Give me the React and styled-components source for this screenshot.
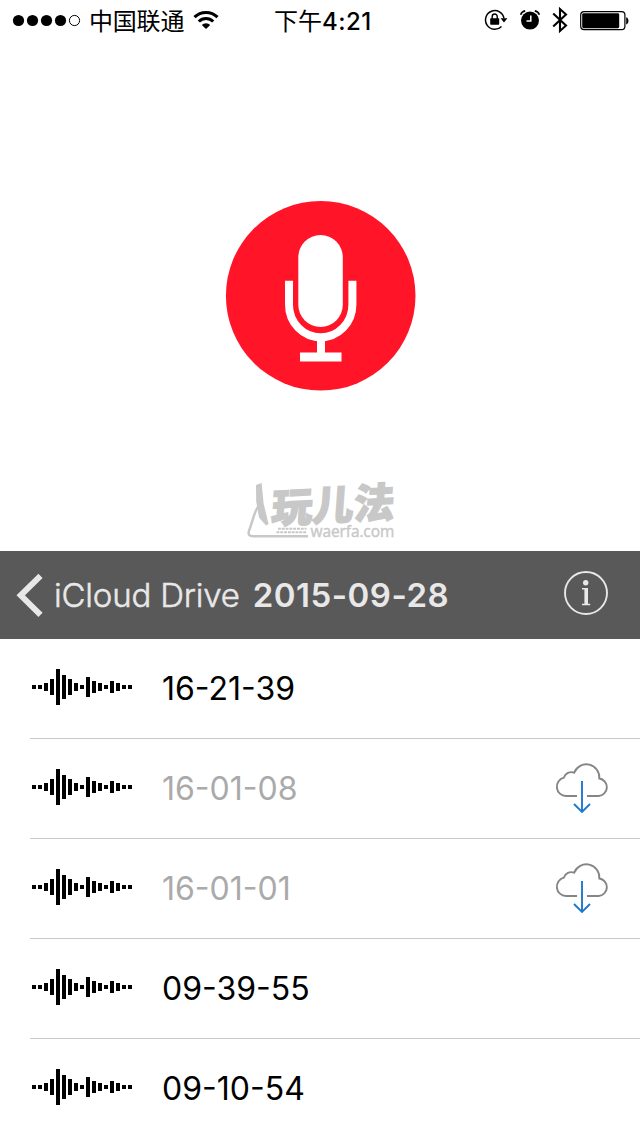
import React from "react"
import styled, { createGlobalStyle } from "styled-components"

const GlobalStyle = createGlobalStyle`
  * {
    box-sizing: border-box;
  }

  body {
    margin: 0;
    background: #fff;
    color: #000;
    font-family: Inter, "Noto Sans CJK SC", sans-serif;
  }

  svg {
    display: block;
    flex: none;
    overflow: visible;
  }
`

const recordings = [
  { name: "16-21-39", local: true },
  { name: "16-01-08", local: false },
  { name: "16-01-01", local: false },
  { name: "09-39-55", local: true },
  { name: "09-10-54", local: true },
]

const waveBars = [4, 4, 8, 16, 36, 24, 16, 8, 4, 20, 12, 8, 4, 12, 8, 4, 4]

const Signal = () => (
  <svg width="68" height="12" viewBox="0 0 68 12">
    {[6.5, 20.5, 34.5, 48.5].map(x => <circle key={x} cx={x} cy="6.5" r="5.6" />)}
    <circle cx="62.5" cy="6.5" r="5.1" fill="none" stroke="#000" />
  </svg>
)

const Wifi = () => (
  <svg width="26" height="20" viewBox="0 0 26 20">
    <g fill="none" stroke="#000" strokeWidth="3.1">
      <path d="M1.5 7.2a16.3 16.3 0 0 1 23 0" />
      <path d="M5.8 11.5a10.2 10.2 0 0 1 14.4 0" />
    </g>
    <path d="M8.8 14.9a6 6 0 0 1 8.4 0L13 19z" />
  </svg>
)

const RotationLock = () => (
  <svg width="24" height="22" viewBox="0 0 24 22">
    <path d="M17.5 17.4A9.3 9.3 0 1 1 20 9.5" fill="none" stroke="#000" strokeWidth="1.5" />
    <path d="M16.6 9.3h6.8L20 13.5z" />
    <rect x="6.2" y="9.2" width="9" height="6.5" rx=".6" />
    <path d="M8.2 10V7.5a2.5 2.5 0 0 1 5 0V10" fill="none" stroke="#000" strokeWidth="1.4" />
  </svg>
)

const Alarm = () => (
  <svg width="20" height="20" viewBox="0 0 20 20">
    <circle cx="10" cy="10.6" r="9" />
    <path d="M10.8 5.5V11H6.5" fill="none" stroke="#fff" strokeWidth="1.5" />
    <path d="M.6 4.8A6 6 0 0 1 5.2.9M14.8.9a6 6 0 0 1 4.6 3.9" fill="none" stroke="#000" strokeWidth="1.6" />
  </svg>
)

const Bluetooth = () => (
  <svg width="16" height="28" viewBox="0 0 16 28">
    <path d="M1.2 7.6l12.8 12-6 5.4V3l6 5.4-12.8 12" fill="none" stroke="#000" strokeWidth="2.1" />
  </svg>
)

const Battery = () => (
  <svg width="49" height="19" viewBox="0 0 49 19">
    <rect x=".7" y=".7" width="44.2" height="18" rx="3.4" fill="none" stroke="#000" strokeWidth="1.2" />
    <rect x="2.2" y="2.2" width="37" height="15" rx="1.4" />
    <path d="M46.2 6.2c3 .8 3 6.4 0 7.2z" />
  </svg>
)

const Microphone = () => (
  <svg width="190" height="190" viewBox="0 0 190 190">
    <circle cx="95.7" cy="94.8" r="94.8" fill="#ff1428" />
    <rect x="73.3" y="34" width="44.5" height="92" rx="22.25" fill="#fff" />
    <path d="M64 79.8v24a31.7 32.5 0 0 0 63.4 0v-24" fill="none" stroke="#fff" strokeWidth="8" />
    <path d="M92 138h8v13.5h16.5v9H75v-9h17z" fill="#fff" />
  </svg>
)

const Compass = () => (
  <svg width="64" height="60" viewBox="0 0 64 60">
    <g fill="none" stroke="#c8c8c8">
      <path d="M12.5 24C7.5 28 5.5 42 1.9 50Q.5 55.2 6 55.2H61" strokeWidth="2.5" />
      <path d="M31 47.7h28.5M29.5 51.2H60" strokeWidth="2.1" strokeDasharray="2.9 .9" />
    </g>
    <path d="M9 4l5.6-2 2 20.5 5 20.5-2.6 1.5-7-8-2.8-16z" fill="#c8c8c8" />
  </svg>
)

const BackArrow = () => (
  <svg width="28" height="44" viewBox="0 0 28 44">
    <path d="M24.5 2.8L4.7 22.3l19.8 19.5" fill="none" stroke="#e8e8e8" strokeWidth="5.9" />
  </svg>
)

const Info = () => (
  <svg width="44" height="44" viewBox="0 0 44 44">
    <circle cx="22" cy="22" r="21" fill="none" stroke="#e8e8e8" strokeWidth="1.9" />
    <circle cx="21.7" cy="11.8" r="2.7" fill="#e8e8e8" />
    <path d="M18 17h6v15.8h2.2v1.4H18v-1.4h2.400V18.500H18z" fill="#e8e8e8" />
  </svg>
)

const Waveform = () => (
  <svg width="100" height="36" viewBox="0 0 100 36">
    {waveBars.map((height, i) => (
      <rect key={i} x={i * 6} y={18 - height / 2} width="4" height={height} />
    ))}
  </svg>
)

const CloudDownload = () => (
  <svg width="52" height="52" viewBox="0 0 52 52" fill="none" strokeWidth="1.9">
    <path
      d="M21 35H10A9.300 9.300 0 0 1 7.800 16.700 7.800 7.800 0 0 1 18.200 11.700 13 13 0 0 1 43.300 17.500 8.800 8.800 0 0 1 42.500 35H31"
      stroke="#858585"
    />
    <path d="M26 20v30.5M18 43l8 8 8-8" stroke="#1e78cc" />
  </svg>
)

const App = () => (
  <Screen>
    <GlobalStyle />
    <StatusBar>
      <Carrier>
        <Signal />
        <span>中国联通</span>
        <Wifi />
      </Carrier>
      <Time>下午<b>4:21</b></Time>
      <Indicators>
        <RotationLock />
        <Alarm />
        <Bluetooth />
        <Battery />
      </Indicators>
    </StatusBar>
    <Hero>
      <Microphone />
      <Watermark>
        <Compass />
        <Brand>
          <BrandName>玩儿法</BrandName>
          <BrandSite>waerfa.com</BrandSite>
        </Brand>
      </Watermark>
    </Hero>
    <NavBar>
      <BackArrow />
      <BackLabel>iCloud Drive</BackLabel>
      <Title>2015-09-28</Title>
      <Info />
    </NavBar>
    <List>
      {recordings.map(({ name, local }) => (
        <Row key={name}>
          <Waveform />
          <RowName $local={local}>{name}</RowName>
          {!local && <CloudDownload />}
        </Row>
      ))}
    </List>
  </Screen>
)

const Screen = styled.div`
  width: 640px;
  height: 1136px;
  overflow: hidden;
  background: #fff;
`

const StatusBar = styled.header`
  display: grid;
  grid-template-columns: 262px 1fr auto;
  align-items: center;
  height: 40px;
  padding: 0 11px 0 12px;
  font-size: 24px;
  line-height: 36px;
`

const Carrier = styled.div`
  display: flex;
  align-items: center;
  gap: 9px;

  span {
    padding-top: 4px;
    letter-spacing: -0.2px;
  }
`

const Time = styled.div`
  padding-top: 4px;
  white-space: nowrap;

  b {
    font-weight: 500;
    letter-spacing: 0.5px;
  }
`

const Indicators = styled.div`
  display: flex;
  align-items: center;
  gap: 12px;
`

const Hero = styled.section`
  display: flex;
  flex-direction: column;
  align-items: center;
  justify-content: space-between;
  height: 511px;
  padding: 161px 0 10px;
`

const Watermark = styled.div`
  display: flex;
  width: 147px;
  color: #c8c8c8;
`

const Brand = styled.div`
  display: flex;
  flex-direction: column;
  margin-left: -39px;
`

const BrandName = styled.div`
  height: 41px;
  font-family: "Noto Sans CJK SC", sans-serif;
  font-size: 41px;
  font-weight: 900;
  line-height: 43px;
  white-space: nowrap;
  -webkit-text-stroke: 1.4px #c8c8c8;
  transform: skew(-4deg, -3deg);
`

const BrandSite = styled.div`
  padding-left: 39px;
  font-family: "Open Sans", sans-serif;
  font-size: 15.5px;
  letter-spacing: -0.1px;
  line-height: 18px;
  -webkit-text-stroke: 0.4px #c8c8c8;
`

const NavBar = styled.nav`
  display: flex;
  align-items: center;
  height: 88px;
  padding: 0 32px 4px 16px;
  background: #595959;
  color: #e8e8e8;
  font-size: 33px;
  line-height: 40px;
  white-space: nowrap;

  > svg:first-child {
    margin-top: 4px;
  }
`

const BackLabel = styled.span`
  margin-left: 10px;
  padding-top: 3px;
  font-weight: 300;
  letter-spacing: -0.2px;
  -webkit-text-stroke: 0.5px #e8e8e8;
`

const Title = styled.span`
  flex: 1;
  margin-left: 13px;
  padding-top: 3px;
  font-weight: 600;
  letter-spacing: 0.5px;
`

const List = styled.main`
  padding-left: 30px;
`

const Row = styled.div`
  display: flex;
  align-items: center;
  height: 100px;
  padding: 0 32px 4px 2px;
  border-bottom: 1px solid #c8c8c8;
`

const RowName = styled.span`
  flex: 1;
  margin-left: 30px;
  padding-top: 4px;
  color: ${({ $local }) => ($local ? "#000" : "#aaa")};
  font-size: 32px;
  line-height: 40px;
`

export default App
